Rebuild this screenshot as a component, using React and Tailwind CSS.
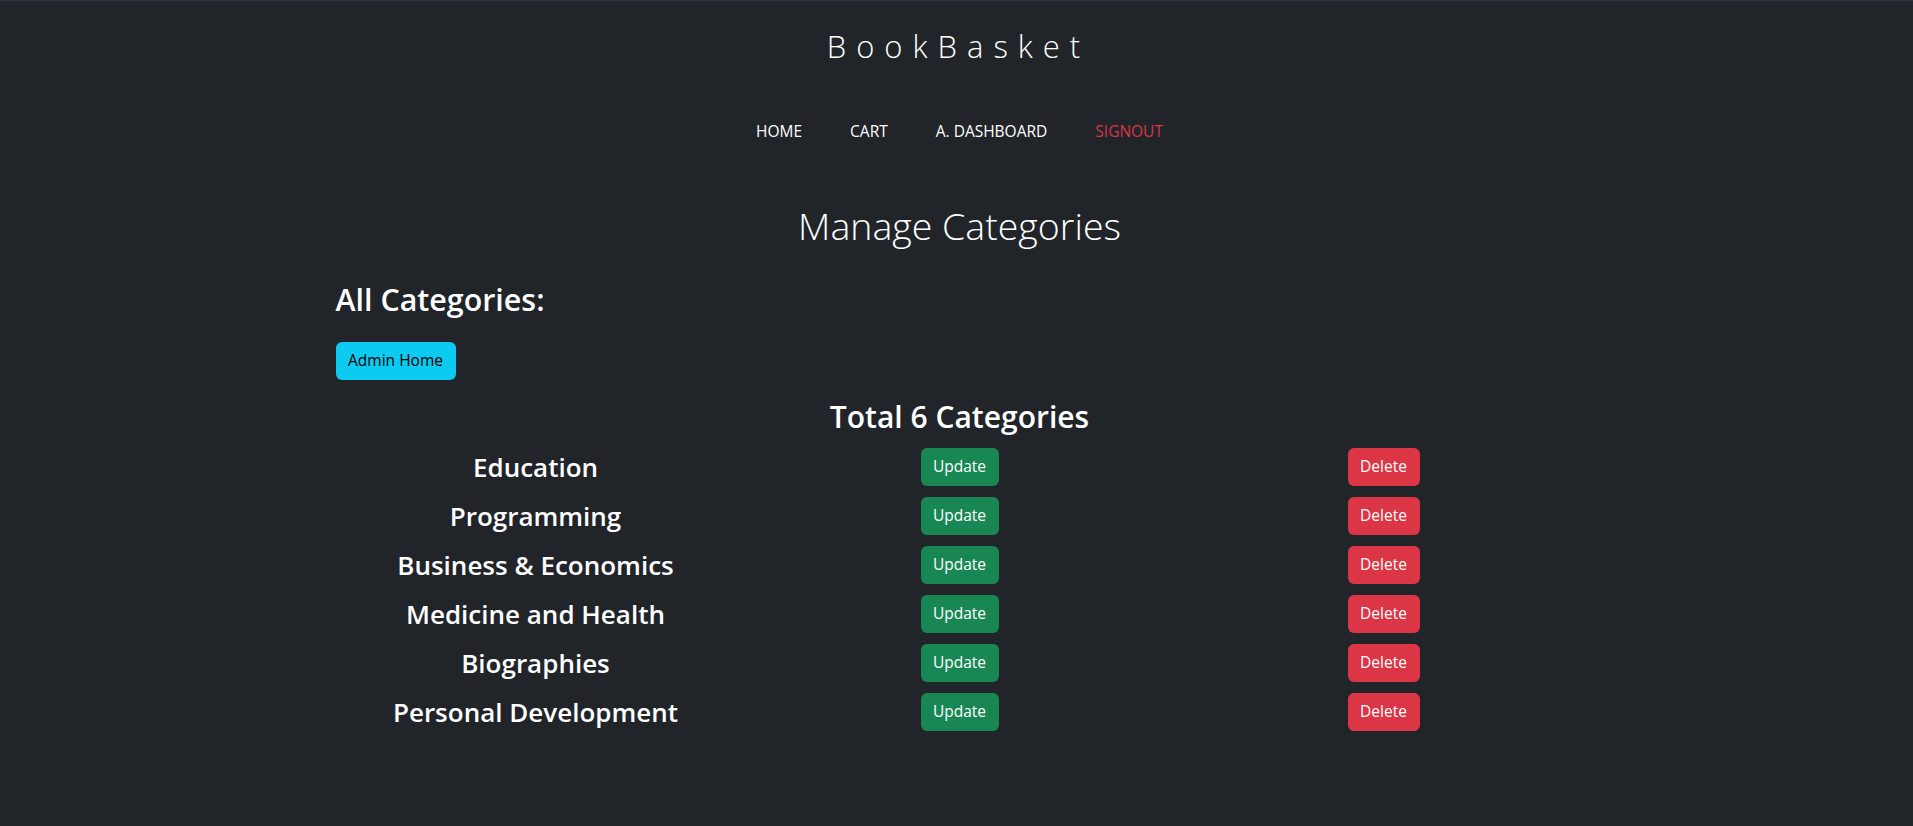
export default function App() {
  const cats = [
    "Education",
    "Programming",
    "Business & Economics",
    "Medicine and Health",
    "Biographies",
    "Personal Development",
  ];
  return (
    <div className="min-h-[826px] bg-[#212529] text-white border-t border-[#2e3140] pl-[6px] font-['Open_Sans',sans-serif]">
      <header className="pt-[25px] text-center">
        <h1 className="text-[31px] leading-[40px] font-light tracking-[10px] pr-[2px]">BookBasket</h1>
        <nav className="mt-[53px] flex justify-center gap-[48px] text-[15.5px] leading-[24px]">
          <a className="text-white">HOME</a>
          <a className="text-white">CART</a>
          <a className="text-white">A. DASHBOARD</a>
          <a className="text-[#dc3545]">SIGNOUT</a>
        </nav>
      </header>
      <h2 className="mt-[59px] text-center text-[37.5px] leading-[48px] font-light">Manage Categories</h2>
      <main className="w-[1248px] mx-auto">
        <h2 className="mt-[31px] text-[30.4px] leading-[38px] font-semibold">All Categories:</h2>
        <button className="mt-[23px] w-[120px] h-[38px] rounded-[6px] bg-[#0dcaf0] text-black text-[15.5px]">Admin Home</button>
        <h2 className="mt-[18px] text-center text-[30px] leading-[38px] font-semibold">Total 6 Categories</h2>
        <div className="mt-[12px] mx-[-12px] flex flex-col gap-[11px]">
          {cats.map((c) => (
            <div key={c} className="grid grid-cols-3 h-[38px] items-center">
              <div className="text-center text-[26px] leading-[38px] font-semibold">{c}</div>
              <div className="flex justify-center">
                <button className="w-[78px] h-[38px] rounded-[6px] bg-[#198754] text-white text-[15.5px]">Update</button>
              </div>
              <div className="flex justify-center">
                <button className="w-[72px] h-[38px] rounded-[6px] bg-[#dc3545] text-white text-[15.5px]">Delete</button>
              </div>
            </div>
          ))}
        </div>
      </main>
    </div>
  );
}
